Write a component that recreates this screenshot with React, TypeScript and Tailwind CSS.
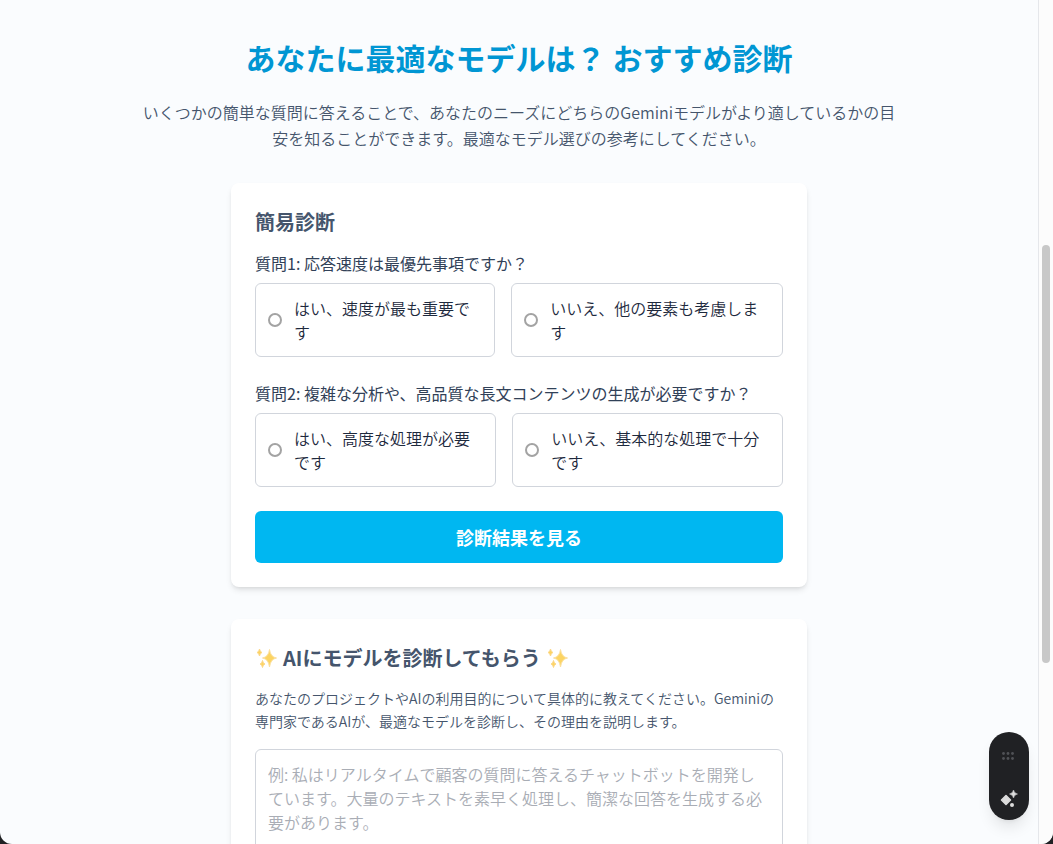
import React from "react";

const questions = [
	{
		id: "q1",
		title: "質問1: 応答速度は最優先事項ですか？",
		options: [
			{ value: "speed", label: "はい、速度が最も重要です" },
			{ value: "other", label: "いいえ、他の要素も考慮します" },
		],
	},
	{
		id: "q2",
		title: "質問2: 複雑な分析や、高品質な長文コンテンツの生成が必要ですか？",
		options: [
			{ value: "advanced", label: "はい、高度な処理が必要です" },
			{ value: "basic", label: "いいえ、基本的な処理で十分です" },
		],
	},
];

const Sparkles = () => {
	return (
		<svg
			width="23"
			height="22"
			viewBox="0 0 23 22"
			fill="#fcd462"
			className="shrink-0"
			role="img"
			aria-label="✨"
		>
			<path d="M14.5 2.5 Q15.5 10 21.5 11 Q15.5 12 14.5 20 Q13.500 12 7.500 11 Q13.500 10 14.5 2.5Z" stroke="#fbe0a0" strokeWidth="1" />
			<path d="M4.5 2 Q5 5 7 5.500 Q5 6 4.5 9 Q4 6 2 5.500 Q4 5 4.5 2Z" stroke="#fcd88a" strokeWidth="1" />
			<path d="M7.5 13.500 Q8 16.500 10 17 Q8 17.500 7.5 20.500 Q7 17.500 5 17 Q7 16.500 7.5 13.500Z" stroke="#fcd88a" strokeWidth="1" />
		</svg>
	);
};

const Question = ({ item }: { item: (typeof questions)[number] }) => {
	return (
		<fieldset className="mb-6">
			<legend className="mb-2 font-normal text-slate-700">{item.title}</legend>
			<div className="flex gap-4">
				{item.options.map((option) => (
					<label
						key={option.value}
						className="flex items-center rounded-md border border-gray-300 p-3 text-slate-800"
					>
						<input
							type="radio"
							name={item.id}
							value={option.value}
							className="mr-3 h-[14px] w-[14px] shrink-0 appearance-none rounded-full border-2 border-[#a3a3a3] bg-white checked:border-4 checked:border-sky-500"
						/>
						<span>{option.label}</span>
					</label>
				))}
			</div>
		</fieldset>
	);
};

const QuizCard = () => {
	return (
		<form
			className="mx-auto mb-8 max-w-xl rounded-lg bg-white p-6 shadow-md"
			onSubmit={(e) => e.preventDefault()}
		>
			<h3 className="mb-[14px] text-xl leading-[30px] font-semibold text-slate-600">簡易診断</h3>
			{questions.map((item) => (
				<Question key={item.id} item={item} />
			))}
			<button
				type="submit"
				className="w-full rounded-md bg-[#00b7f1] py-3 text-lg font-bold text-white hover:bg-sky-500"
			>
				診断結果を見る
			</button>
		</form>
	);
};

const AiCard = () => {
	const [text, setText] = React.useState("");
	return (
		<div className="mx-auto max-w-xl rounded-lg bg-white p-6 shadow-md">
			<h3 className="mb-[14px] flex items-center gap-[5px] text-xl leading-[30px] font-semibold text-slate-600">
				<Sparkles />
				<span>AIにモデルを診断してもらう</span>
				<Sparkles />
			</h3>
			<p className="mb-4 text-sm leading-[23px] text-slate-600">
				あなたのプロジェクトやAIの利用目的について具体的に教えてください。Geminiの専門家であるAIが、最適なモデルを診断し、その理由を説明します。
			</p>
			<textarea
				rows={5}
				value={text}
				onChange={(e) => setText(e.target.value)}
				aria-label="AIの利用目的"
				placeholder="例: 私はリアルタイムで顧客の質問に答えるチャットボットを開発しています。大量のテキストを素早く処理し、簡潔な回答を生成する必要があります。"
				className="block w-full resize-none rounded-md border border-gray-300 p-3 text-slate-800 placeholder:text-[#a9adb5]"
			/>
		</div>
	);
};

const FloatingTools = () => {
	return (
		<div className="fixed right-6 bottom-6 flex w-10 flex-col items-center justify-between rounded-full bg-[#202124] pt-5 pb-3 shadow-lg">
			<svg width="14" height="8" viewBox="0 0 14 8" fill="#505256" aria-hidden="true">
				<circle cx="1.5" cy="1.5" r="1.4" />
				<circle cx="6" cy="1.5" r="1.4" />
				<circle cx="10.500" cy="1.5" r="1.4" />
				<circle cx="1.5" cy="6.5" r="1.4" />
				<circle cx="6" cy="6.5" r="1.4" />
				<circle cx="10.500" cy="6.5" r="1.4" />
			</svg>
			<button type="button" aria-label="AI" className="mt-7">
				<svg width="20" height="20" viewBox="0 0 20 20" fill="#dcdcdc" className="block">
					<path d="M7 7.500 11.500 12 7 16.500 2.500 12Z" stroke="#dcdcdc" strokeWidth="1.500" strokeLinejoin="round" />
					<path d="M14.500 2 Q15.200 5.300 18.500 6 Q15.200 6.700 14.500 10 Q13.800 6.700 10.500 6 Q13.800 5.300 14.500 2Z" stroke="#dcdcdc" strokeWidth="0.500" />
					<circle cx="13" cy="17" r="2" />
				</svg>
			</button>
		</div>
	);
};

export default function App() {
	return (
		<div className="h-screen bg-[#202124] font-['Noto_Sans_CJK_JP','Noto_Sans',sans-serif] font-[350]">
			<div className="flex h-full overflow-hidden rounded-b-xl bg-[#fafcfe]">
				<main className="min-w-0 flex-1 px-6 pt-[39px]">
					<h2 className="mb-6 text-center text-3xl font-bold text-[#0096d3]">
						あなたに最適なモデルは？ おすすめ診断
					</h2>
					<p className="mx-auto mb-8 max-w-3xl text-center leading-[26px] text-slate-600">
						いくつかの簡単な質問に答えることで、あなたのニーズにどちらのGeminiモデルがより適しているかの目安を知ることができます。最適なモデル選びの参考にしてください。
					</p>
					<QuizCard />
					<AiCard />
				</main>
				{/* scrollbar */}
				<div className="w-[15px] border-l border-gray-200 bg-[#fcfcfc] px-[3px] pt-[245px]">
					<div className="h-[418px] rounded-full bg-[#c8c8c8]" />
				</div>
			</div>
			<FloatingTools />
		</div>
	);
}
